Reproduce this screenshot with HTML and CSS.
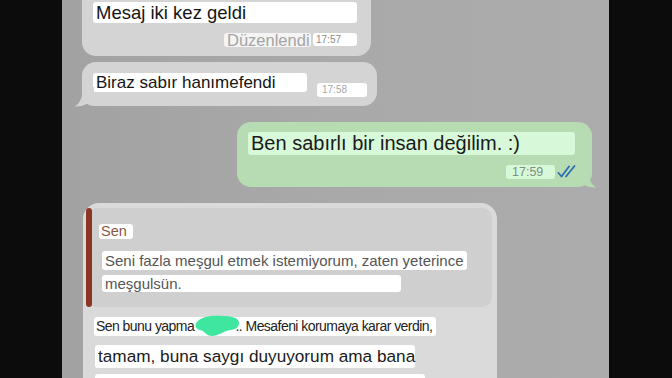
FILE: index.html
```html
<!DOCTYPE html>
<html lang="tr">
<head>
<meta charset="utf-8">
<link rel="stylesheet" href="styles.css">
</head>
<body>
<div class="screen">
  <div class="side"></div>
  <div class="chat">
    <div class="bubble in b1">
      <div class="hl t18">Mesaj iki kez geldi</div>
      <div class="meta">
        <span class="hl edited">Düzenlendi</span>
        <span class="hl time t1">17:57</span>
      </div>
    </div>

    <div class="bubble in b2">
      <div class="row">
        <span class="hl t17 w2">Biraz sabır hanımefendi</span>
        <span class="hl time t2">17:58</span>
      </div>
      <svg class="tail tail-l" viewBox="0 0 20 20" width="20" height="20"><path d="M9 0 C9 10 6 16 1 19.5 C6 19.5 11 18.5 14 16 L20 16 L20 0 Z"/></svg>
    </div>

    <div class="bubble out b3">
      <div class="hl t20 w3">Ben sabırlı bir insan değilim. :)</div>
      <div class="meta meta3">
        <span class="hl time t3">17:59</span>
        <svg class="ticks" viewBox="0 0 20 13" width="20" height="13"><path d="M1.5 8 L4.5 11.5 L12 1.5 M9 11.5 L17.5 1" fill="none" stroke="#2d6db0" stroke-width="1.8" stroke-linecap="round" stroke-linejoin="round"/></svg>
      </div>
      <svg class="tail tail-r" viewBox="0 0 20 20" width="20" height="20"><path d="M11 0 C11 10 14 16 19 19.5 C14 19.5 9 18.5 6 16 L0 16 L0 0 Z"/></svg>
    </div>

    <div class="bubble in b4">
      <div class="quote">
        <div class="bar"></div>
        <div class="qbody">
          <span class="hl sen">Sen</span>
          <div class="qtext">
            <span class="hl ql q1">Seni fazla meşgul etmek istemiyorum, zaten yeterince</span>
            <span class="hl ql q2">meşgulsün.</span>
          </div>
        </div>
      </div>
      <div class="msg">
        <span class="hl m1">Sen bunu yapma <svg class="blob" viewBox="0 0 46 22" width="46" height="22"><path d="M4 6 C8 1 20 0 30 1 C38 1 45 3 45 8 C45 13 40 15 36 15 C30 16 24 21 18 21 C12 21 11 16 6 15 C1 14 0 9 4 6 Z" fill="#3fe6a0"/></svg>.. Mesafeni korumaya karar verdin,</span>
        <span class="hl m2">tamam, buna saygı duyuyorum ama bana</span>
        <span class="hl m3">&nbsp;</span>
      </div>
    </div>
  </div>
  <div class="side"></div>
</div>
</body>
</html>
```

FILE: styles.css
```css
* { box-sizing: border-box; }
html, body { margin: 0; padding: 0; }
body {
  width: 672px;
  height: 378px;
  overflow: hidden;
  background: #0c0c0c;
  font-family: "Liberation Sans", Arial, sans-serif;
}
.screen { display: flex; height: 378px; }
.side { width: 62px; flex: none; background: #0c0c0c; }
.side:last-child { width: 63px; }
.chat {
  width: 547px;
  flex: none;
  background: linear-gradient(90deg, #a2a2a2 0%, #a9a9a9 50%, #acacac 100%);
  display: flex;
  flex-direction: column;
  align-items: flex-start;
  padding-left: 20px;
  overflow: hidden;
}
.bubble { position: relative; border-radius: 14px; }
.in { background: #d4d4d4; }
.out { background: #b7dbb2; }
.hl {
  background: #fff;
  border-radius: 3px;
  color: #151515;
  display: block;
  white-space: nowrap;
}
.b1 {
  width: 289px;
  margin-top: -20px;
  padding: 22px 14px 9px 11px;
}
.t18 { font-size: 18.5px; height: 21px; line-height: 21px; padding-left: 3px; }
.meta { display: flex; justify-content: flex-end; align-items: flex-start; gap: 2px; margin-top: 10px; }
.edited {
  width: 87px; height: 14px; line-height: 14px;
  font-size: 16.5px; color: #a4a4a4; padding-left: 3px;
  background: #f4f4f4;
}
.time { font-size: 10px; color: #9a9a9a; height: 14px; line-height: 14px; padding-left: 3px; }
.t1 { width: 44px; height: 13px; line-height: 13px; color: #8a8a8a; }
.b2 {
  width: 295px;
  margin-top: 6px;
  padding: 11px 10px 9px 11px;
  border-bottom-left-radius: 12px;
}
.row { display: flex; align-items: flex-start; }
.t17 { font-size: 17px; height: 19px; line-height: 19px; padding-left: 3px; }
.w2 { width: 214px; }
.t2 { width: 50px; margin-left: 10px; margin-top: 10px; color: #a8a8a8; padding-left: 5px; }
.tail { position: absolute; bottom: -1px; }
.tail-l { left: -8px; fill: #d4d4d4; }
.tail-r { right: -5px; fill: #b7dbb2; }
.b3 {
  width: 355px;
  margin-top: 16px;
  margin-left: 155px;
  padding: 10px 15px 8px 11px;
}
.out .hl { background: #d8f9d9; }
.t20 { font-size: 20px; height: 23px; line-height: 23px; padding-left: 3px; color: #1a1a1a; }
.w3 { width: 327px; }
.meta3 { gap: 2px; margin-top: 10px; }
.t3 { width: 49px; font-size: 12.5px; color: #7f8f7f; padding-left: 6px; }
.ticks { display: block; margin-top: 0; }
.b4 {
  width: 414px;
  margin-top: 16px;
  margin-left: 1px;
  padding: 5px 5px 0 3px;
  background: #dadada;
  border-top-left-radius: 16px;
  border-top-right-radius: 16px;
}
.quote {
  display: flex;
  background: #cfcfcf;
  border-radius: 10px;
  height: 99px;
}
.bar { width: 6px; flex: none; background: #8a3622; border-radius: 3px; }
.qbody { padding: 16px 0 0 7px; }
.sen {
  display: block; width: 34px; height: 15px; line-height: 15px;
  font-size: 14.5px; color: #8a5846; padding-left: 2px;
}
.qtext { display: flex; flex-direction: column; align-items: flex-start; gap: 5px; margin-top: 12px; margin-left: 3px; }
.ql { font-size: 15px; color: #555; padding-left: 3px; }
.q1 { width: 365px; height: 19px; line-height: 19px; }
.q2 { width: 299px; height: 17px; line-height: 17px; }
.msg { display: flex; flex-direction: column; align-items: flex-start; padding: 10px 0 0 8px; }
.m1 {
  width: 342px; height: 19px; line-height: 19px;
  font-size: 14px; letter-spacing: -0.55px; color: #222; padding-left: 2px;
}
.blob { display: inline-block; vertical-align: middle; margin: -4px -4px -2px -4px; }
.m2 {
  width: 320px; height: 23px; line-height: 23px; margin-top: 9px; margin-left: 1px;
  font-size: 17.2px; color: #1a1a1a; padding-left: 3px;
}
.m3 { width: 330px; height: 20px; margin-top: 6px; margin-left: 1px; }
```
